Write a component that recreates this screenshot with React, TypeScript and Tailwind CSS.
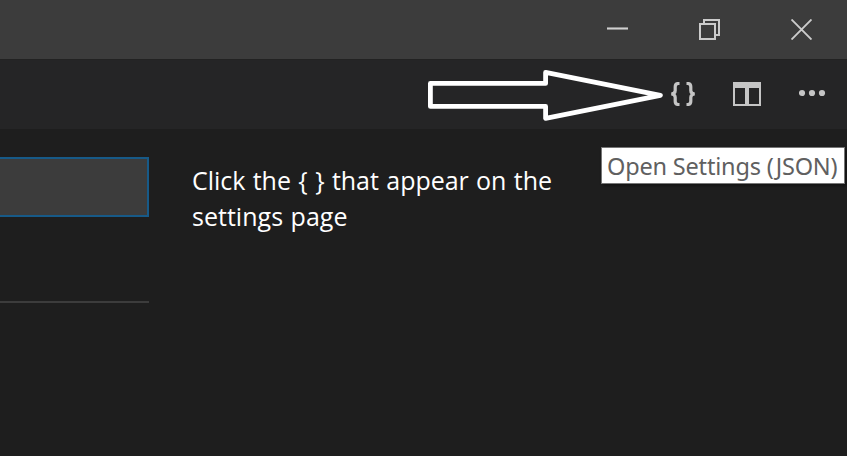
function WindowControls() {
  return (
    <header className="flex h-[59px] items-center justify-end bg-[#3c3c3c] pr-[35px]">
      <div className="flex gap-[71px]">
        <svg width="21" height="21" viewBox="0 0 21 21" aria-label="Minimize">
          <path d="M0 8h21v3H0z" fill="#8e8e8e" />
          <path d="M0 9h21v1H0z" fill="#d0d0d0" />
        </svg>
        <svg width="21" height="21" viewBox="0 0 21 21" fill="none" stroke="#cccccc" strokeWidth="2" aria-label="Restore">
          <path d="M1 5h15v15H1z" />
          <path d="M5 5V1h15v15h-4" />
        </svg>
        <svg width="21" height="21" viewBox="0 0 21 21" fill="none" stroke="#cccccc" strokeWidth="1.9" aria-label="Close">
          <path d="M.5.5l20 20M20.5.5l-20 20" />
        </svg>
      </div>
    </header>
  );
}

function EditorActions() {
  return (
    <div className="relative flex h-[70px] justify-end border-t border-[#222222] bg-[#252526] pr-[21px] pt-[22px]">
      <svg className="absolute left-[424px] top-[6px]" width="244" height="60" viewBox="424 66 244 60" fill="none" stroke="#ffffff" strokeWidth="4.8" strokeLinejoin="round">
        <path d="M430.4 83.4H545.6V72.4L660.4 95.3L545.6 118.4V106.4H430.4Z" />
      </svg>
      <svg width="24" height="24" viewBox="0 0 24 24" fill="none" stroke="#c5c5c5" strokeWidth="3.2" aria-label="Open Settings (JSON)">
        <path d="M8.5 1.5H7.3Q4.2 1.5 4.2 4.8V8.5Q4.2 11.7.3 12Q4.2 12.3 4.2 15.5V19.2Q4.2 22.5 7.3 22.5H8.5" />
        <path d="M15.5 1.5H16.7Q19.8 1.5 19.8 4.8V8.5Q19.8 11.7 23.7 12Q19.8 12.3 19.8 15.5V19.2Q19.8 22.5 16.7 22.5H15.5" />
      </svg>
      <svg className="ml-[38px]" width="28" height="24" viewBox="0 0 28 24" aria-label="Split Editor">
        <path fill="#c5c5c5" fillRule="evenodd" d="M0 0h28v24H0zM2 6v16h10V6zM16 6v16h10V6z" />
      </svg>
      <svg className="ml-[38px]" width="27" height="24" viewBox="0 0 27 24" fill="#c5c5c5" aria-label="More Actions">
        <circle cx="3" cy="11" r="3.1" />
        <circle cx="13" cy="11" r="3.1" />
        <circle cx="23" cy="11" r="3.1" />
      </svg>
    </div>
  );
}

export default function App() {
  return (
    <div className="relative flex h-[456px] w-[847px] flex-col overflow-hidden bg-[#1e1e1e]">
      <WindowControls />
      <EditorActions />
      <main className="flex flex-1 pt-7">
        <section className="w-[149px]">
          <div className="h-[60px] border-2 border-l-0 border-[#175a88] bg-[#3c3c3c]" />
          <div className="mt-[84px] h-[2px] bg-[#3c3c3c]" />
        </section>
        <p className="ml-[43px] mt-[5px] whitespace-nowrap font-['Open_Sans',sans-serif] text-[25px] leading-[36px] text-white [word-spacing:1px]">
          <span className="block tracking-[-0.04px]">Click the {"{ }"} that appear on the</span>
          <span className="block tracking-[0.02px]">settings page</span>
        </p>
      </main>
      <div
        role="tooltip"
        className="absolute left-[601px] top-[147px] flex h-[37px] w-[244px] items-center whitespace-nowrap border border-[#767676] bg-white pl-[5px] pt-[2px] font-['Noto_Sans',sans-serif] text-[23.5px] leading-[35px] tracking-[-0.18px] text-[#606060] shadow-[2px_2px_3px_rgba(0,0,0,0.4)]"
      >
        Open Settings (JSON)
      </div>
    </div>
  );
}
